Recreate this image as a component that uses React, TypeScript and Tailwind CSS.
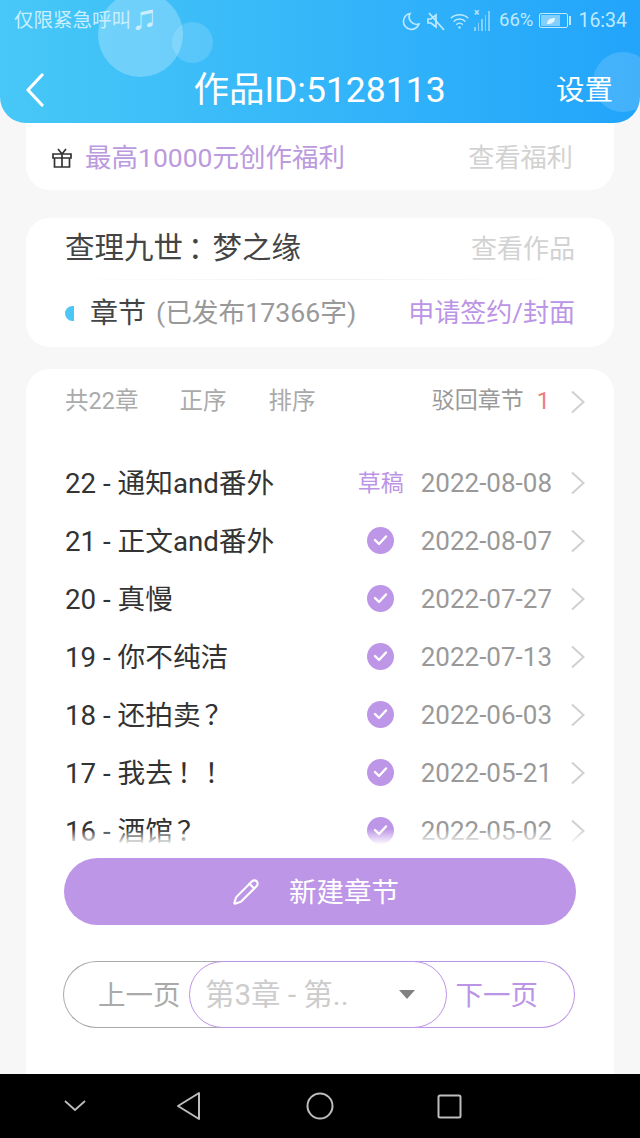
import { Pencil } from "lucide-react";

const chapters: { title: string; mark?: string; date: string; draft?: boolean }[] = [
  { title: "22 - 通知and番外", date: "2022-08-08", draft: true },
  { title: "21 - 正文and番外", date: "2022-08-07" },
  { title: "20 - 真慢", date: "2022-07-27" },
  { title: "19 - 你不纯洁", date: "2022-07-13" },
  { title: "18 - 还拍卖", mark: "？", date: "2022-06-03" },
  { title: "17 - 我去", mark: "！！", date: "2022-05-21" },
  { title: "16 - 酒馆", mark: "？", date: "2022-05-02" },
];

function Chevron({ className }: { className: string }) {
  return (
    <svg width="16" height="24" viewBox="0 0 16 24" fill="none" stroke="#d0d0d0" strokeWidth="2" className={className}>
      <path d="M2 1.500 13.500 12 2 22.500" />
    </svg>
  );
}

function StatusIcons() {
  return (
    <div className="flex items-center gap-[3px] text-[#bfeaff]">
      <svg width="20" height="20" viewBox="0 0 20 20" fill="none" stroke="currentColor" strokeWidth="1.6" className="mr-[2px]">
        <path d="M9 2.500a8 8 0 1 0 9 10.500A7.500 7.500 0 0 1 9 2.500z" />
      </svg>
      <svg width="20" height="20" viewBox="0 0 20 20" fill="none" stroke="currentColor" strokeWidth="1.7">
        <path d="M2 8v4h3l5 4V4L5 8H2z" />
        <path d="M3 2l15 17" />
      </svg>
      <svg width="22" height="20" viewBox="0 0 24 20" fill="none" stroke="currentColor" strokeWidth="1.6">
        <path d="M2 7a14 14 0 0 1 19 0M5 10.500a9.500 9.500 0 0 1 13 0M8 14a5 5 0 0 1 7 0" />
        <circle cx="11.500" cy="17" r="1.300" fill="currentColor" stroke="none" />
      </svg>
      <div className="relative flex h-5 w-[20px] items-end gap-[2px]">
        <span className="h-1 w-[1.500px] bg-current opacity-60" />
        <span className="h-2 w-[1.500px] bg-current opacity-60" />
        <span className="h-3 w-[1.500px] bg-current opacity-60" />
        <span className="h-4 w-[1.500px] bg-current opacity-60" />
        <span className="h-5 w-[1.500px] bg-current opacity-60" />
        <span className="absolute left-0 top-[-4px] text-[10px] leading-3 font-bold">×</span>
      </div>
    </div>
  );
}

function Battery() {
  return (
    <div className="ml-[6px] flex items-center gap-[1px]">
      <div className="flex h-[15px] w-[29px] items-center rounded-[2px] border border-[#bfeaff] p-[1px]">
        <div className="flex h-full w-[19px] items-center justify-center bg-[#bfeaff]/60">
          <svg width="10" height="8" viewBox="0 0 10 8">
            <path d="M1 7C1 3 4 1 9 1 9 5 6 7 1 7z" fill="#e4f6ff" />
          </svg>
        </div>
      </div>
      <span className="h-[9px] w-[2px] bg-[#bfeaff]" />
    </div>
  );
}

function Header() {
  return (
    <header className="relative h-[123px] shrink-0 overflow-hidden rounded-b-[26px] bg-gradient-to-r from-[#47c8f7] to-[#22a4fb]">
      <span className="absolute left-[98px] top-[-8px] h-[85px] w-[85px] rounded-full bg-white/25" />
      <span className="absolute left-[172px] top-[22px] h-[41px] w-[41px] rounded-full bg-white/15" />
      <span className="absolute right-[-13px] top-[52px] h-[60px] w-[60px] rounded-full bg-white/15" />

      <div className="relative flex h-[41px] items-center justify-between pl-[14px] pr-[13px] text-[19.500px] text-[#bfeaff]">
        <div className="flex items-center gap-[4px] text-[#c9efff]">
          <span>仅限紧急呼叫</span>
          <span className="text-[21px] leading-none">♫</span>
        </div>
        <div className="flex items-center">
          <StatusIcons />
          <span className="ml-[5px] text-[18.500px]">66%</span>
          <Battery />
          <span className="ml-[7px]">16:34</span>
        </div>
      </div>

      <div className="relative mt-[20px] flex h-[60px] items-center justify-between pl-[25px] pr-[27px] text-white">
        <svg width="20" height="34" viewBox="0 0 20 34" fill="none" stroke="white" strokeWidth="3.200" strokeLinecap="round" strokeLinejoin="round" className="mt-[-2px]">
          <path d="M17 2 3 17l14 15" />
        </svg>
        <span className="pl-[38px] text-[35.500px] leading-none">作品ID:5128113</span>
        <span className="text-[28.500px] leading-none">设置</span>
      </div>
    </header>
  );
}

function ChapterRow({ title, mark, date, draft }: { title: string; mark?: string; date: string; draft?: boolean }) {
  return (
    <div className="flex h-[58px] shrink-0 items-center">
      <span className="flex-1 pt-[1px] text-[27.700px] leading-none text-[#333333]">
        {title}
        {mark && <span className="ml-[4px]">{mark}</span>}
      </span>
      {draft ? (
        <span className="mr-[17px] text-[23px] leading-none text-[#bc94e6]">草稿</span>
      ) : (
        <span className="mb-[2px] mr-[27px] flex h-[27px] w-[27px] items-center justify-center rounded-full bg-[#be96e7]">
          <svg width="15" height="12" viewBox="0 0 15 12" fill="none" stroke="white" strokeWidth="2.400" strokeLinecap="round" strokeLinejoin="round">
            <path d="M2 6l4 4 7-7.500" />
          </svg>
        </span>
      )}
      <span className="text-[26px] leading-none text-[#999999]">{date}</span>
      <Chevron className="ml-[18px]" />
    </div>
  );
}

export default function App() {
  return (
    <div
      className="flex h-[1138px] w-[640px] flex-col overflow-hidden bg-[#f7f7f7]"
      style={{ fontFamily: 'Roboto, "Noto Sans CJK SC", sans-serif' }}
    >
      <Header />

      <main className="flex flex-1 flex-col px-[26px]">
        {/* welfare card */}
        <section className="flex h-[67px] shrink-0 items-center rounded-b-[24px] bg-white pl-[25px] pr-[41px] pt-[3px]">
          <svg width="22" height="22" viewBox="0 0 22 22" fill="none" stroke="#333333" strokeWidth="1.700" className="mr-[12px]">
            <path d="M2 7h18v4H2zM3.500 11v9h15v-9M11 7v13M7 2l4 5 4-5" />
          </svg>
          <span className="flex-1 text-[26.500px] text-[#bc9ade]">最高10000元创作福利</span>
          <span className="pt-[2px] text-[26.200px] text-[#d2d2d2]">查看福利</span>
        </section>

        {/* book card */}
        <section className="mt-[28px] flex h-[129px] shrink-0 flex-col rounded-[24px] bg-white px-[39px]">
          <div className="flex h-[61px] shrink-0 items-center justify-between">
            <span className="text-[29.500px] leading-none text-[#444444]">
              查理九世
              <span className="ml-[5px] tracking-[-5px]">：</span>
              梦之缘
            </span>
            <span className="text-[26px] leading-none text-[#d2d2d2]">查看作品</span>
          </div>
          <div className="h-px shrink-0 bg-gradient-to-r from-white via-[#f0f0f0] to-white" />
          <div className="flex flex-1 items-center">
            <span className="mr-[16px] h-[15px] w-[9px] rounded-l-full bg-[#4cc6f4]" />
            <span className="mr-[10px] text-[28px] text-[#444444]">章节</span>
            <span className="flex-1 text-[26.700px] text-[#999999]">(已发布17366字)</span>
            <span className="text-[26px] text-[#bc94e6]">申请签约/封面</span>
          </div>
        </section>

        {/* chapter list card */}
        <section className="mt-[22px] flex flex-1 flex-col rounded-t-[24px] bg-white px-[39px]">
          <div className="flex h-[64px] shrink-0 items-center pt-[1px] text-[23.500px] text-[#aaaaaa]">
            <span className="mr-[41px]">共22章</span>
            <span className="mr-[42px]">正序</span>
            <span className="flex-1">排序</span>
            <span className="text-[23px] text-[#999999]">驳回章节</span>
            <span className="ml-[13px] text-[#ee7d85]">1</span>
            <Chevron className="ml-[20px] mr-[-11px]" />
          </div>

          <div className="relative mr-[-11px] mt-[21px] h-[391px] shrink-0">
            {chapters.map((c) => (
              <ChapterRow key={c.title} title={c.title} mark={c.mark} date={c.date} draft={c.draft} />
            ))}
            <div className="absolute inset-x-0 bottom-0 h-[16px] bg-gradient-to-b from-white/0 to-white" />
          </div>

          <button className="relative mt-[13px] ml-[-1px] flex h-[67px] w-[512px] shrink-0 items-center justify-center rounded-full bg-[#be96e7] pr-[9px] text-[27.500px] text-white">
            <Pencil size={28} strokeWidth={1.8} className="mr-[29px]" />
            <span className="pt-[3px]">新建章节</span>
          </button>

          <div className="relative mt-[36px] ml-[-2px] flex h-[67px] w-[512px] shrink-0 text-[27.500px]">
            <div className="flex w-1/2 items-center rounded-l-full border-[1.500px] border-r-0 border-[#a9a9a9] pl-[34px] pt-[2px] text-[#aaaaaa]">
              上一页
            </div>
            <div className="flex w-1/2 items-center justify-end rounded-r-full border-[1.500px] border-l-0 border-[#bc94e6] pr-[36px] pt-[2px] text-[#bc94e6]">
              下一页
            </div>
            <div className="absolute inset-y-0 left-[126px] flex w-[258px] items-center justify-between rounded-full border-[1.500px] border-[#bc94e6] bg-white pl-[15px] pr-[31px]">
              <span className="pt-[2px] text-[29.500px] text-[#cccccc]">第3章 - 第..</span>
              <span className="h-0 w-0 border-x-[8px] border-t-[9px] border-x-transparent border-t-[#808080]" />
            </div>
          </div>
        </section>
      </main>

      <nav className="relative flex h-[64px] shrink-0 items-center bg-black text-[#bdbdbd]">
        <svg width="24" height="14" viewBox="0 0 24 14" fill="none" stroke="currentColor" strokeWidth="1.800" className="ml-[63px]">
          <path d="M2 2l10 9 10-9" />
        </svg>
        <svg width="26" height="30" viewBox="0 0 26 30" fill="none" stroke="currentColor" strokeWidth="2" strokeLinejoin="round" className="ml-[89px]">
          <path d="M23 2v26L2 15z" />
        </svg>
        <svg width="28" height="28" viewBox="0 0 28 28" fill="none" stroke="currentColor" strokeWidth="2" className="ml-[104px]">
          <circle cx="14" cy="14" r="12.500" />
        </svg>
        <svg width="25" height="25" viewBox="0 0 25 25" fill="none" stroke="currentColor" strokeWidth="2" className="ml-[103px]">
          <rect x="1.500" y="1.500" width="22" height="22" rx="1.500" />
        </svg>
      </nav>
    </div>
  );
}
